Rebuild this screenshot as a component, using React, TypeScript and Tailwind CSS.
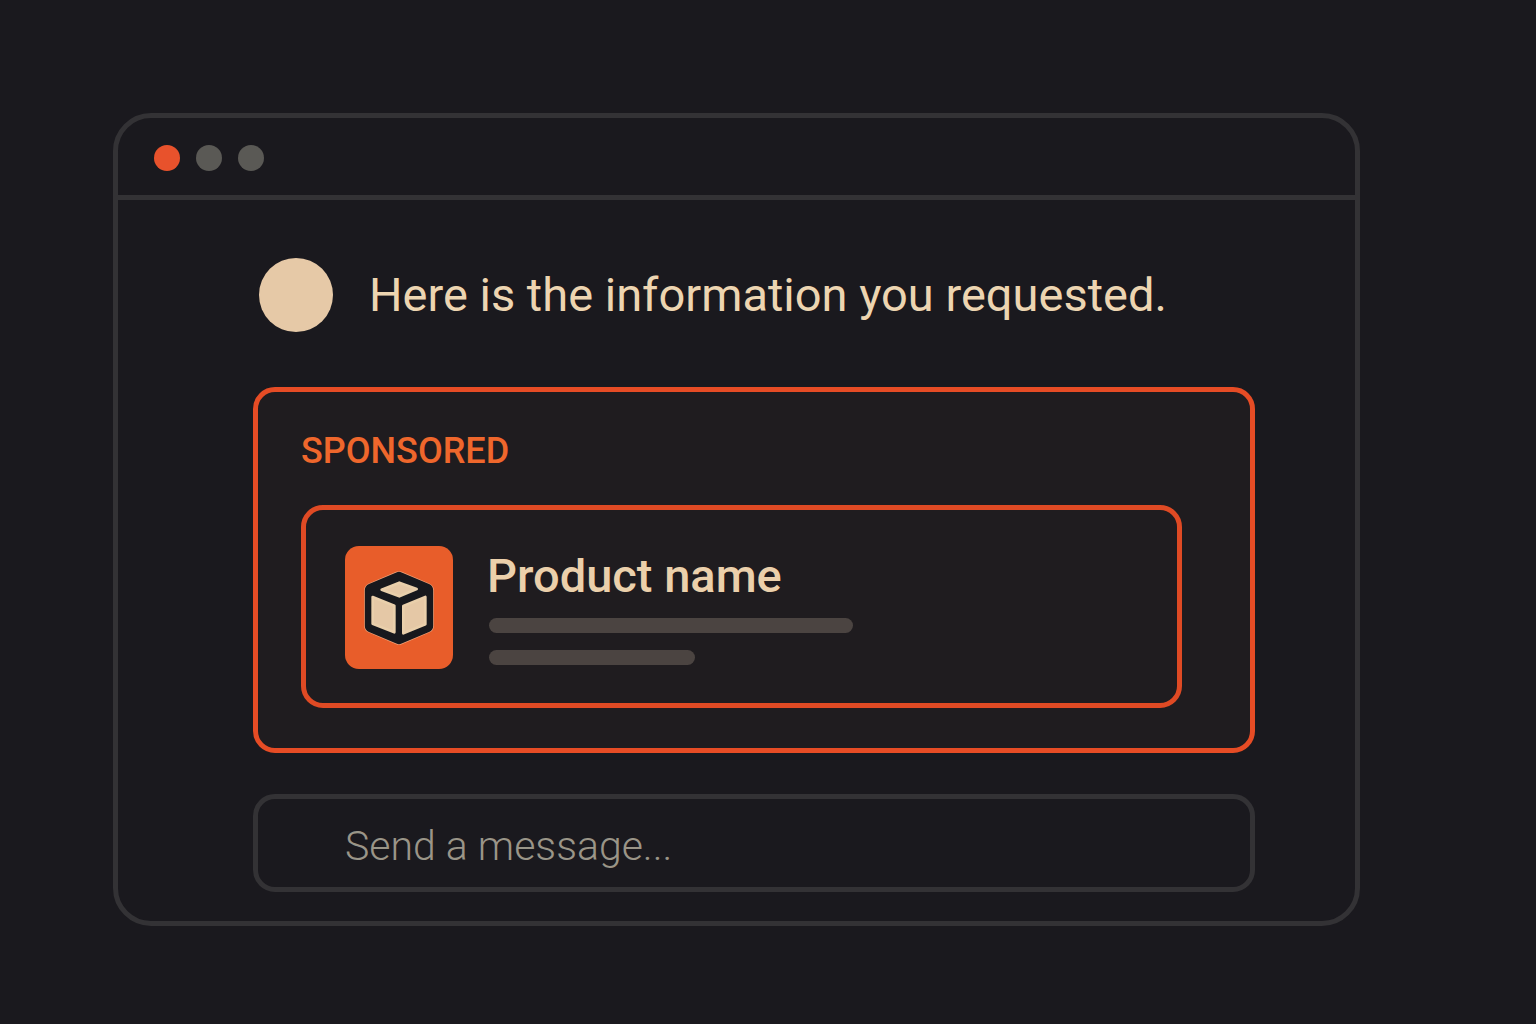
const CubeIcon = () => (
  <svg viewBox="0 0 210 222" className="w-[70px]" aria-hidden="true">
    <g strokeLinejoin="round">
      <path
        d="M105 23 187 58V164L105 199 23 164V58Z"
        fill="#17181d"
        stroke="#f0a379"
        strokeWidth="45"
      />
      <path
        d="M105 23 187 58V164L105 199 23 164V58Z"
        fill="#17181d"
        stroke="#17181d"
        strokeWidth="41"
      />
      <g fill="#e5c8a6" stroke="#e9cfab" strokeWidth="8">
        <path d="M53 56 106 35 158 54 106 76Z" />
        <path d="M26 78 91 104V184L26 158Z" />
        <path d="M118 105 184 78V160L118 187Z" />
      </g>
    </g>
  </svg>
);

const TitleBar = () => (
  <header className="flex gap-4 border-b-5 border-[#333235] px-9 pt-[27px] pb-6">
    <span className="size-[26px] rounded-full bg-[#e8522c]" />
    <span className="size-[26px] rounded-full bg-[#5a5955]" />
    <span className="size-[26px] rounded-full bg-[#5a5955]" />
  </header>
);

const Reply = () => (
  <div className="flex items-center gap-9 pl-[6px]">
    <span className="size-[74px] shrink-0 rounded-full bg-[#e6c9a7]" />
    <p className="text-[47px] leading-[56px] text-[#edd5b1]">
      Here is the information you requested.
    </p>
  </div>
);

const Product = () => (
  <article className="flex gap-[34px] rounded-[22px] border-5 border-[#df4a24] pt-9 pr-9 pb-[34px] pl-[39px]">
    <div className="flex h-[123px] w-[108px] shrink-0 items-center justify-center rounded-[14px] bg-[#e85d2a]">
      <CubeIcon />
    </div>
    <div className="flex flex-1 flex-col items-start">
      <h2 className="text-[47px] leading-[60px] font-medium text-[#ebd0ab]">
        Product name
      </h2>
      <span className="mt-3 ml-[2px] h-[15px] w-[364px] rounded-full bg-[#4b4441]" />
      <span className="mt-[17px] ml-[2px] h-[15px] w-[206px] rounded-full bg-[#4b4441]" />
    </div>
  </article>
);

const Sponsored = () => (
  <section className="mt-[55px] rounded-[22px] border-5 border-[#e64c25] bg-[#1f1c1f] pt-[38px] pr-[68px] pb-10 pl-[43px]">
    <p className="mb-[33px] text-[36px] leading-[42px] font-medium text-[#ef672c]">
      SPONSORED
    </p>
    <Product />
  </section>
);

const App = () => {
  return (
    <div className="min-h-screen bg-[#1a191e] py-[113px] pr-44 pl-[113px] font-['Roboto',sans-serif]">
      <main className="rounded-[38px] border-5 border-[#333235]">
        <TitleBar />
        <div className="pt-[58px] pr-[100px] pb-[29px] pl-[135px]">
          <Reply />
          <Sponsored />
          <input
            type="text"
            aria-label="Send a message"
            placeholder="Send a message..."
            className="mt-[41px] block h-[98px] w-full rounded-[22px] border-5 border-[#333235] bg-transparent pt-1.5 pr-9 pl-[87px] text-[41px] font-light text-[#edd5b1] outline-none placeholder:text-[#9a9588]"
          />
        </div>
      </main>
    </div>
  );
};

export default App;
